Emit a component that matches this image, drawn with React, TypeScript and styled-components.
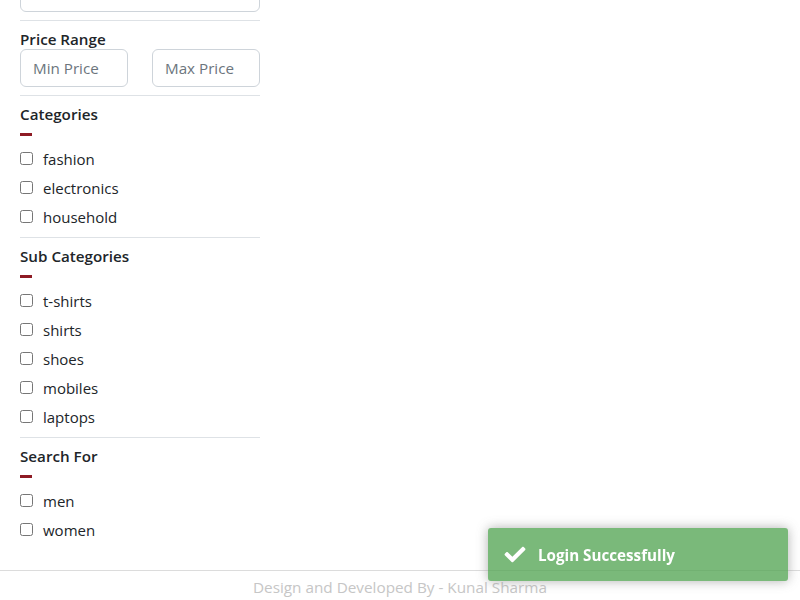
import React from 'react'
import styled, { createGlobalStyle } from 'styled-components'
import { FaCheck } from 'react-icons/fa'

const GlobalStyle = createGlobalStyle`
  html, body {
    margin: 0;
    padding: 0;
    background: #fff;
  }
  body {
    font-family: "Open Sans", "Noto Sans", sans-serif;
    font-size: 15px;
    color: #212529;
    overflow: hidden;
  }
`

const filters = [
    { title: 'Categories', items: ['fashion', 'electronics', 'household'] },
    { title: 'Sub Categories', items: ['t-shirts', 'shirts', 'shoes', 'mobiles', 'laptops'] },
    { title: 'Search For', items: ['men', 'women'] },
]

const App: React.FC = () => {
    return (
        <>
            <GlobalStyle />
            <StyledPage>
                <Sidebar>
                    <TextInput className={'search'} type="text" placeholder="Search" />
                    <Divider />
                    <Heading $tight>Price Range</Heading>
                    <PriceRow>
                        <TextInput type="number" placeholder="Min Price" />
                        <TextInput type="number" placeholder="Max Price" />
                    </PriceRow>
                    {filters.map((group) => (
                        <React.Fragment key={group.title}>
                            <Divider />
                            <Heading>{group.title}</Heading>
                            <Dash />
                            <CheckList>
                                {group.items.map((item) => (
                                    <CheckItem key={item}>
                                        <input type="checkbox" />
                                        <span>{item}</span>
                                    </CheckItem>
                                ))}
                            </CheckList>
                        </React.Fragment>
                    ))}
                </Sidebar>
                <Footer>
                    <FooterText>Design and Developed By - Kunal Sharma</FooterText>
                </Footer>
            </StyledPage>
            <Toast>
                <FaCheck className={'toast-icon'} />
                <span>Login Successfully</span>
            </Toast>
        </>
    )
}

export default App

const StyledPage = styled.div`
display: flex;
flex-direction: column;
`

const Sidebar = styled.aside`
width: 240px;
margin-left: 20px;
display: flex;
flex-direction: column;
.search{
    margin-top: -26px;
    margin-bottom: 2px;
}
`

const TextInput = styled.input`
box-sizing: border-box;
width: 100%;
height: 38px;
padding: 6px 12px;
border: 1px solid #ced4da;
border-radius: 6px;
font-family: inherit;
font-size: 15.2px;
color: #495057;
background: #fff;
outline: none;
&::placeholder{
    color: #6c757d;
}
&::-webkit-inner-spin-button, &::-webkit-outer-spin-button{
    -webkit-appearance: none;
    margin: 0;
}
`

const Divider = styled.hr`
width: 100%;
margin: 6px 0 0;
border: 0;
border-top: 1px solid #dee2e6;
`

const Heading = styled.div<{ $tight?: boolean }>`
font-size: 15.2px;
font-weight: 600;
color: #212529;
line-height: ${(p) => (p.$tight ? '19px' : '24px')};
margin-top: ${(p) => (p.$tight ? '9px' : '6px')};
`

const PriceRow = styled.div`
display: grid;
grid-template-columns: 108px 108px;
justify-content: space-between;
margin-bottom: 2px;
`

const Dash = styled.div`
width: 12px;
height: 3px;
margin-top: 7px;
background: #8e1b24;
`

const CheckList = styled.div`
display: flex;
flex-direction: column;
margin-top: 8px;
`

const CheckItem = styled.label`
display: flex;
align-items: center;
height: 29px;
gap: 10px;
font-size: 15px;
color: #212529;
input{
    width: 13px;
    height: 13px;
    margin: 0;
}
`

const Footer = styled.footer`
margin-top: 26px;
border-top: 1px solid #dcdcdc;
display: flex;
justify-content: center;
`

const FooterText = styled.div`
margin-top: 4px;
line-height: 24px;
font-size: 15.3px;
color: #c6c6c6;
`

const Toast = styled.div`
position: fixed;
right: 12px;
bottom: 19px;
width: 300px;
box-sizing: border-box;
padding: 16px 15px 14px 50px;
background: #51a351;
opacity: 0.76;
border-radius: 3px;
box-shadow: 0 0 12px #999;
color: #fff;
font-weight: 700;
font-size: 15.2px;
line-height: 23px;
.toast-icon{
    position: absolute;
    left: 15px;
    top: 16px;
    width: 24px;
    height: 21px;
}
`
